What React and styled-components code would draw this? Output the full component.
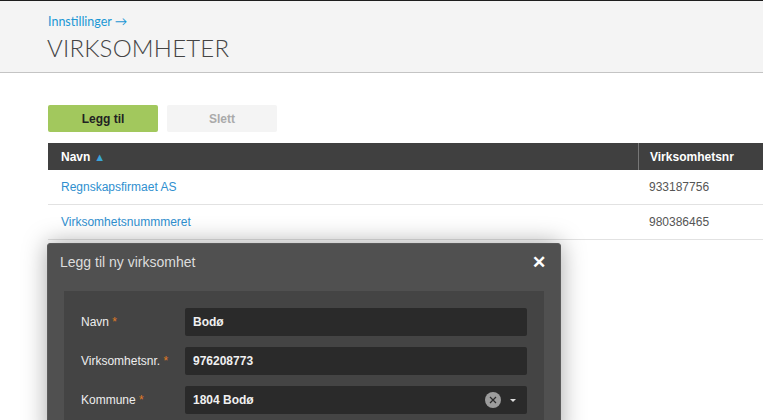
import React from "react";
import styled, { createGlobalStyle } from "styled-components";

const Global = createGlobalStyle`
  html, body { margin: 0; padding: 0; background: #fff; }
  body { font-family: "Liberation Sans", Arial, sans-serif; overflow: hidden; }
  * { box-sizing: border-box; }
`;

const Page = styled.div`
  position: relative;
  width: 763px;
  height: 420px;
  overflow: hidden;
`;

const Header = styled.header`
  height: 73px;
  background: #f4f4f4;
  border-top: 1px solid #1e1e1e;
  border-bottom: 1px solid #c4c4c4;
  padding: 13px 0 0 47px;
`;

const Crumb = styled.a`
  display: block;
  font-family: Lato, sans-serif;
  font-size: 12.5px;
  color: #1c97d4;
  margin-left: 1px;
  line-height: 16px;
`;

const Title = styled.h1`
  margin: 3px 0 0;
  font-family: Lato, sans-serif;
  font-weight: 300;
  font-size: 24px;
  letter-spacing: 0.2px;
  color: #444;
  line-height: 30px;
`;

const Content = styled.main`
  padding: 32px 0 0 48px;
`;

const Toolbar = styled.div`
  display: flex;
  gap: 9px;
`;

const Button = styled.button`
  width: 110px;
  height: 27px;
  border: none;
  border-radius: 2px;
  font-family: "Liberation Sans", Arial, sans-serif;
  font-weight: bold;
  font-size: 12px;
  background: ${(p) => (p.$primary ? "#a2c85d" : "#f4f4f4")};
  color: ${(p) => (p.$primary ? "#222" : "#aaa")};
`;

const Table = styled.div`
  margin-top: 11px;
  width: 715px;
`;

const Row = styled.div`
  display: grid;
  grid-template-columns: 590px 1fr;
  height: ${(p) => (p.$head ? "27px" : "35px")};
  background: ${(p) => (p.$head ? "#404040" : "#fff")};
  border-bottom: ${(p) => (p.$head ? "none" : "1px solid #e2e2e2")};
  font-size: 12px;
`;

const Cell = styled.div`
  display: flex;
  align-items: center;
  padding-left: ${(p) => (p.$second ? "11px" : "13px")};
  color: ${(p) => (p.$head ? "#fff" : p.$link ? "#2f8fcf" : "#555")};
  font-weight: ${(p) => (p.$head ? "bold" : "normal")};
  border-left: ${(p) => (p.$head && p.$second ? "1px solid #777" : "none")};
`;

const SortArrow = styled.span`
  color: #3aa5d9;
  font-size: 11px;
  margin-left: 4px;
`;

const Modal = styled.div`
  position: absolute;
  left: 47px;
  top: 243px;
  width: 514px;
  height: 200px;
  background: #505050;
  border: 1px solid #5a5a5a;
  border-radius: 3px;
  box-shadow: 0 0 24px rgba(0, 0, 0, 0.35);
`;

const ModalHead = styled.div`
  display: flex;
  align-items: flex-start;
  justify-content: space-between;
  height: 47px;
  padding: 10px 14px 0 12px;
  color: #ddd;
  font-size: 14px;
`;

const Close = styled.span`
  color: #fff;
  font-weight: bold;
  font-size: 17px;
  line-height: 18px;
`;

const Panel = styled.div`
  margin: 0 16px;
  background: #444;
  padding: 17px;
  display: flex;
  flex-direction: column;
  gap: 11px;
`;

const Field = styled.div`
  display: grid;
  grid-template-columns: 104px 342px;
  align-items: center;
`;

const Label = styled.label`
  color: #eee;
  font-size: 12px;
`;

const Star = styled.span`
  color: #e07b25;
`;

const Input = styled.div`
  height: 28px;
  background: #2a2a2a;
  border-radius: 2px;
  display: flex;
  align-items: center;
  padding: 0 8px;
  color: #f0f0f0;
  font-size: 12px;
  font-weight: bold;
`;

const Value = styled.span`
  flex: 1;
`;

const ClearBtn = styled.span`
  width: 16px;
  height: 16px;
  border-radius: 50%;
  background: #9c9c9c;
  display: flex;
  align-items: center;
  justify-content: center;
  margin-right: 9px;
`;

const Caret = styled.span`
  width: 0;
  height: 0;
  border-left: 3px solid transparent;
  border-right: 3px solid transparent;
  border-top: 3px solid #ddd;
  margin-right: 3px;
`;

export default function App() {
  return (
    <Page>
      <Global />
      <Header>
        <Crumb>Innstillinger →</Crumb>
        <Title>VIRKSOMHETER</Title>
      </Header>
      <Content>
        <Toolbar>
          <Button $primary>Legg til</Button>
          <Button>Slett</Button>
        </Toolbar>
        <Table>
          <Row $head>
            <Cell $head>
              Navn<SortArrow>▲</SortArrow>
            </Cell>
            <Cell $head $second>Virksomhetsnr</Cell>
          </Row>
          <Row>
            <Cell $link>Regnskapsfirmaet AS</Cell>
            <Cell $second>933187756</Cell>
          </Row>
          <Row>
            <Cell $link>Virksomhetsnummmeret</Cell>
            <Cell $second>980386465</Cell>
          </Row>
        </Table>
      </Content>
      <Modal>
        <ModalHead>
          <span>Legg til ny virksomhet</span>
          <Close>✕</Close>
        </ModalHead>
        <Panel>
          <Field>
            <Label>
              Navn <Star>*</Star>
            </Label>
            <Input>
              <Value>Bodø</Value>
            </Input>
          </Field>
          <Field>
            <Label>
              Virksomhetsnr. <Star>*</Star>
            </Label>
            <Input>
              <Value>976208773</Value>
            </Input>
          </Field>
          <Field>
            <Label>
              Kommune <Star>*</Star>
            </Label>
            <Input>
              <Value>1804 Bodø</Value>
              <ClearBtn>
                <svg width="8" height="8" viewBox="0 0 8 8">
                  <path d="M1 1L7 7M7 1L1 7" stroke="#2a2a2a" strokeWidth="1.2" />
                </svg>
              </ClearBtn>
              <Caret />
            </Input>
          </Field>
        </Panel>
      </Modal>
    </Page>
  );
}
